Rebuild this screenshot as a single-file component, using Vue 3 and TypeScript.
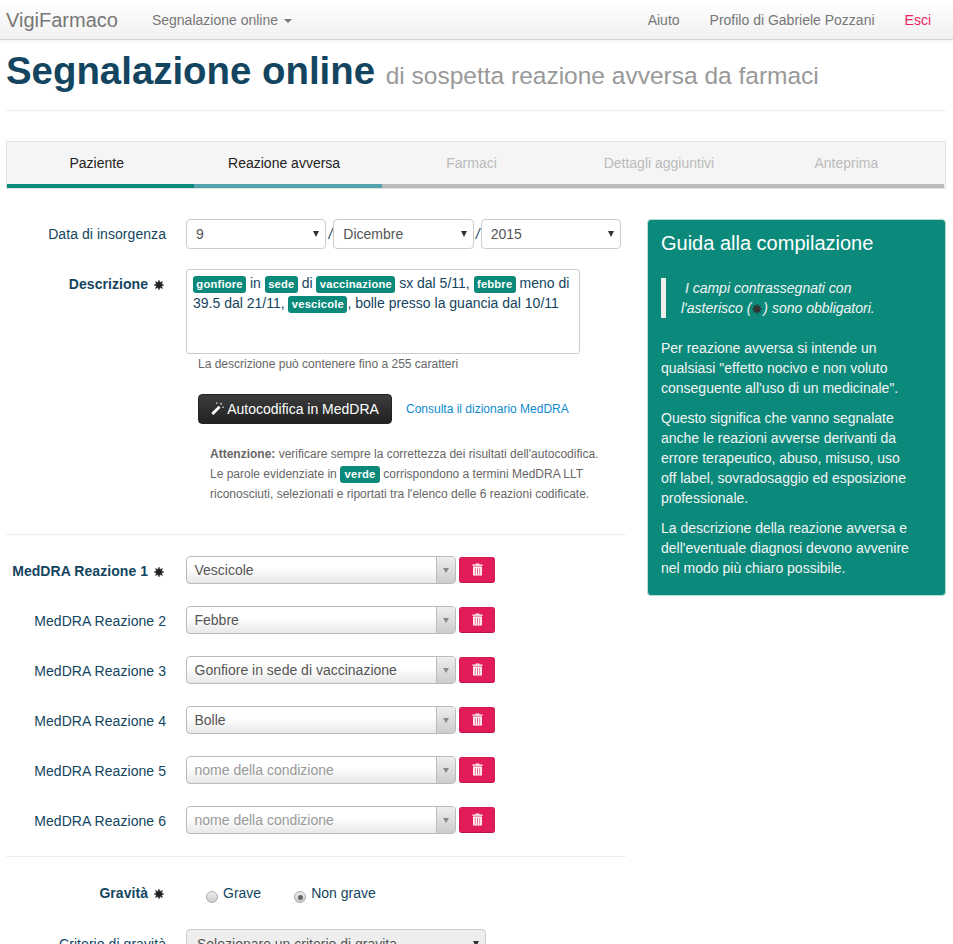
<script setup lang="ts">
interface Step { name: string; state: string }
interface Reaction { n: number; value: string; required: boolean }

const steps: Step[] = [
  { name: 'Paziente', state: 'done' },
  { name: 'Reazione avversa', state: 'current' },
  { name: 'Farmaci', state: 'todo' },
  { name: 'Dettagli aggiuntivi', state: 'todo' },
  { name: 'Anteprima', state: 'todo' },
]

const reactions: Reaction[] = [
  { n: 1, value: 'Vescicole', required: true },
  { n: 2, value: 'Febbre', required: false },
  { n: 3, value: 'Gonfiore in sede di vaccinazione', required: false },
  { n: 4, value: 'Bolle', required: false },
  { n: 5, value: '', required: false },
  { n: 6, value: '', required: false },
]

const starPath = 'M5 0 L6.07 2.41 L8.54 1.46 L7.59 3.93 L10 5 L7.59 6.07 L8.54 8.54 L6.07 7.59 L5 10 L3.93 7.59 L1.46 8.54 L2.41 6.07 L0 5 L2.41 3.93 L1.46 1.46 L3.93 2.41 Z'
</script>

<template>
  <div class="page">
    <nav class="navbar">
      <a class="brand">VigiFarmaco</a>
      <a class="nav-item">Segnalazione online <span class="caret"></span></a>
      <div class="nav-right">
        <a class="nav-item">Aiuto</a>
        <a class="nav-item">Profilo di Gabriele Pozzani</a>
        <a class="nav-item exit">Esci</a>
      </div>
    </nav>

    <main class="container">
      <header class="page-header">
        <h1>Segnalazione online <small>di sospetta reazione avversa da farmaci</small></h1>
      </header>

      <div class="steps">
        <div v-for="s in steps" :key="s.name" class="step" :class="s.state">{{ s.name }}</div>
      </div>

      <div class="columns">
        <form class="form" @submit.prevent>
          <div class="row date-row">
            <label class="lbl">Data di insorgenza</label>
            <div class="date-group">
              <div class="select-wrap"><select class="form-select"><option>9</option></select></div>
              <span class="slash">/</span>
              <div class="select-wrap"><select class="form-select"><option>Dicembre</option></select></div>
              <span class="slash">/</span>
              <div class="select-wrap"><select class="form-select"><option>2015</option></select></div>
            </div>
          </div>

          <div class="row descr-row">
            <label class="lbl req">Descrizione
              <svg class="star" viewBox="0 0 10 10"><path :d="starPath" /></svg>
            </label>
            <div class="descr-col">
              <div class="textarea">
                <span class="tag">gonfiore</span> in <span class="tag">sede</span> di <span class="tag">vaccinazione</span> sx dal 5/11, <span class="tag">febbre</span> meno di 39.5 dal 21/11, <span class="tag">vescicole</span>, bolle presso la guancia dal 10/11
              </div>
              <p class="help">La descrizione può contenere fino a 255 caratteri</p>
              <div class="actions">
                <button type="button" class="btn-dark">
                  <svg class="wand" viewBox="0 0 14 14">
                    <path d="M0.4 11.8 L8.2 4 L10.3 6.1 L2.5 13.9 Z" fill="#fff" />
                    <path d="M10.8 0.8 V3.2 M9.6 2 H12 M13 4.8 V6.4 M12.2 5.6 H13.8 M6.2 0.4 V2 M5.4 1.2 H7" stroke="#ddd" stroke-width="0.8" fill="none" />
                  </svg>
                  Autocodifica in MedDRA
                </button>
                <a class="dict">Consulta il dizionario MedDRA</a>
              </div>
              <p class="note">
                <b>Attenzione:</b> verificare sempre la correttezza dei risultati dell'autocodifica.<br />
                Le parole evidenziate in <span class="tag">verde</span> corrispondono a termini MedDRA LLT<br />
                riconosciuti, selezionati e riportati tra l'elenco delle 6 reazioni codificate.
              </p>
            </div>
          </div>

          <hr class="sep first-sep" />

          <div v-for="r in reactions" :key="r.n" class="row med-row">
            <label class="lbl" :class="{ req: r.required }">MedDRA Reazione {{ r.n }}
              <svg v-if="r.required" class="star" viewBox="0 0 10 10"><path :d="starPath" /></svg>
            </label>
            <div class="combo">
              <span class="combo-text" :class="{ empty: !r.value }">{{ r.value || 'nome della condizione' }}</span>
              <span class="combo-btn"><span class="combo-caret"></span></span>
            </div>
            <button type="button" class="btn-del" aria-label="Elimina">
              <svg class="trash" viewBox="0 0 12 14">
                <path d="M4 1.5 V0.4 H8 V1.5 H11.6 V3 H0.4 V1.5 Z M5 1.5 H7 V1.2 H5 Z" fill="#fff" fill-rule="evenodd" />
                <path fill-rule="evenodd" d="M1.2 3.8 H10.8 V13.6 H1.2 Z M3.1 5 V12.6 H3.8 V5 Z M5.65 5 V12.6 H6.35 V5 Z M8.2 5 V12.6 H8.9 V5 Z" fill="#fff" />
              </svg>
            </button>
          </div>

          <hr class="sep second-sep" />

          <div class="row grav-row">
            <label class="lbl req">Gravità
              <svg class="star" viewBox="0 0 10 10"><path :d="starPath" /></svg>
            </label>
            <div class="radios">
              <span class="radio"><span class="dot"></span>Grave</span>
              <span class="radio"><span class="dot on"></span>Non grave</span>
            </div>
          </div>

          <div class="row crit-row">
            <label class="lbl">Criterio di gravità</label>
            <div class="select-wrap crit"><select class="form-select"><option>Selezionare un criterio di gravita</option></select></div>
          </div>
        </form>

        <aside class="guide">
          <h3>Guida alla compilazione</h3>
          <blockquote>
            &nbsp;I campi contrassegnati con<br />l'asterisco (<svg class="star quote-star" viewBox="0 0 10 10"><path :d="starPath" /></svg>) sono obbligatori.
          </blockquote>
          <p>Per reazione avversa si intende un qualsiasi "effetto nocivo e non voluto conseguente all'uso di un medicinale".</p>
          <p>Questo significa che vanno segnalate anche le reazioni avverse derivanti da errore terapeutico, abuso, misuso, uso off label, sovradosaggio ed esposizione professionale.</p>
          <p>La descrizione della reazione avversa e dell'eventuale diagnosi devono avvenire nel modo più chiaro possibile.</p>
        </aside>
      </div>
    </main>
  </div>
</template>

<style>
html, body { margin: 0; padding: 0; background: #fff; }
</style>

<style scoped>
* { box-sizing: border-box; }
.page {
  height: 944px;
  overflow: hidden;
  font-family: "Liberation Sans", Arial, sans-serif;
  font-size: 14px;
  line-height: 20px;
  color: #134560;
}
.navbar {
  height: 40px;
  display: flex;
  align-items: center;
  padding: 0 22px 0 6px;
  background: linear-gradient(to bottom, #ffffff, #f1f1f1);
  border-bottom: 1px solid #d5d5d5;
  box-shadow: 0 1px 5px rgba(0, 0, 0, 0.08);
  position: relative;
}
.brand { font-size: 20px; color: #777; margin-right: 34px; }
.nav-item { color: #777; }
.caret {
  display: inline-block;
  width: 0;
  height: 0;
  margin-left: 2px;
  vertical-align: middle;
  border-top: 4px solid #777;
  border-left: 4px solid transparent;
  border-right: 4px solid transparent;
}
.nav-right { margin-left: auto; display: flex; gap: 30px; }
.exit { color: #e91e63; }
.container { padding: 0 7px 0 6px; }
.page-header { height: 71px; border-bottom: 1px solid #eee; margin-bottom: 30px; }
h1 {
  margin: 0;
  padding-top: 8px;
  font-size: 38.4px;
  line-height: 46px;
  font-weight: 700;
  color: #134560;
  white-space: nowrap;
}
h1 small { font-size: 24.5px; font-weight: 400; color: #999; }
.steps {
  display: flex;
  height: 48px;
  background: #f5f5f5;
  border: 1px solid #e3e3e3;
  padding-right: 1px;
  margin-bottom: 30px;
}
.step {
  flex: 1 1 0;
  text-align: center;
  padding: 11px 8px 0 0;
  color: #222;
  border-bottom: 4px solid #bbb;
  height: 46px;
}
.step.done { border-bottom-color: #0b8a7b; }
.step.current { border-bottom-color: #52a3ad; }
.step.todo { color: #bbb; }
.columns { display: flex; gap: 21px; align-items: flex-start; }
.form { width: 620px; flex: none; }
.guide {
  width: 299px;
  flex: none;
  height: 377px;
  background: #0b8a7b;
  border: 1px solid #b5dcd6;
  border-radius: 4px;
  padding: 9px 30px 9px 13px;
  color: #f4f4f4;
}
.guide h3 { margin: 3px 0 24px; font-size: 20px; line-height: 22px; font-weight: 400; color: #fff; white-space: nowrap; }
.guide blockquote {
  margin: 0 0 20px;
  padding: 0 0 0 15px;
  border-left: 5px solid #eee;
  font-style: italic;
  white-space: nowrap;
}
.guide p { margin: 0 0 10px; }
.row { display: flex; align-items: flex-start; }
.lbl { width: 160px; margin-right: 20px; text-align: right; flex: none; color: #134560; letter-spacing: 0.06px; }
.lbl.req { font-weight: 700; padding-right: 2px; white-space: nowrap; }
.star { width: 10px; height: 10px; margin-left: 2px; fill: #222; stroke: #222; stroke-width: 0.4; vertical-align: -1px; overflow: visible; }
.quote-star { margin: 0 1px; fill: #333; stroke: #333; }
.date-row { margin-bottom: 20px; }
.date-row .lbl { padding-top: 5px; }
.date-group { display: flex; align-items: center; gap: 0; width: 435px; }
.select-wrap { position: relative; flex: 1 1 0; min-width: 0; height: 30px; }
.select-wrap::after {
  content: "";
  position: absolute;
  right: 7px;
  top: 12px;
  width: 0;
  height: 0;
  border-top: 6px solid #333;
  border-left: 3.5px solid transparent;
  border-right: 3.5px solid transparent;
  pointer-events: none;
}
.form-select {
  appearance: none;
  -webkit-appearance: none;
  display: block;
  width: 100%;
  height: 30px;
  border: 1px solid #ccc;
  border-radius: 4px;
  background: #fff;
  color: #555;
  font-family: inherit;
  font-size: 14px;
  padding: 4px 9px;
}
.slash { width: 7px; text-indent: 1px; text-align: center; color: #134560; font-style: italic; }
.descr-row .lbl { padding-top: 5px; }
.descr-col { flex: none; width: 440px; }
.textarea {
  width: 394px;
  height: 85px;
  border: 1px solid #ccc;
  border-radius: 3px;
  padding: 3px 6px;
  color: #134560;
}
.tag {
  display: inline;
  background: #0b8a7b;
  color: #fff;
  font-size: 11.2px;
  font-weight: 700;
  line-height: 1;
  padding: 0.2em 0.3em 0.3em;
  border-radius: 3px;
  letter-spacing: 0.2px;
}
.help { margin: 2px 0 0 12px; font-size: 12px; line-height: 16px; color: #666; }
.actions { display: flex; align-items: center; margin: 22px 0 0 12px; }
.btn-dark {
  width: 194px;
  height: 30px;
  border: 1px solid #222;
  border-radius: 4px;
  background: linear-gradient(to bottom, #3c3c3c, #222);
  color: #fff;
  font-family: inherit;
  font-size: 14px;
  padding: 0;
  white-space: nowrap;
}
.wand { width: 13px; height: 13px; vertical-align: -1px; }
.dict { margin-left: 14px; font-size: 12px; color: #0d8bd0; }
.note { margin: 20px 0 0 24px; font-size: 12px; color: #666; line-height: 20px; white-space: nowrap; }
.note .tag { font-size: 11.2px; padding: 0.2em 0.4em 0.3em; }
.sep { border: 0; border-top: 1px solid #eee; margin: 0; }
.first-sep { margin-top: 30px; margin-bottom: 21px; }
.med-row { height: 28px; margin-bottom: 22px; align-items: flex-start; }
.med-row .lbl { padding-top: 5px; }
.combo {
  width: 270px;
  height: 28px;
  flex: none;
  display: flex;
  border: 1px solid #bbb;
  border-radius: 4px;
  background: linear-gradient(to bottom, #fff 40%, #e8e8e8);
  overflow: hidden;
}
.combo-text { flex: 1; padding-left: 7.5px; line-height: 27px; color: #555; }
.combo-text.empty { color: #999; }
.combo-btn {
  width: 19px;
  border-left: 1px solid #bbb;
  background: linear-gradient(to bottom, #eee, #ccc);
  display: flex;
  align-items: center;
  justify-content: center;
}
.combo-caret {
  width: 0;
  height: 0;
  border-top: 5px solid #888;
  border-left: 3.5px solid transparent;
  border-right: 3.5px solid transparent;
}
.btn-del {
  width: 36px;
  height: 26px;
  margin: 1px 0 0 3px;
  border: 1px solid #d41a52;
  border-bottom-color: #b8144a;
  border-radius: 3px;
  background: #e11c58;
  padding: 0;
  display: flex;
  align-items: center;
  justify-content: center;
}
.trash { width: 11px; height: 13px; margin-top: -1px; }
.second-sep { margin-bottom: 26px; }
.grav-row { margin-bottom: 26px; }
.radios { display: flex; gap: 33px; padding-left: 20px; }
.radio { display: inline-flex; align-items: flex-start; gap: 5px; color: #134560; }
.dot {
  width: 12px;
  height: 12px;
  margin-top: 8px;
  border: 1px solid #aaa;
  border-radius: 50%;
  background: linear-gradient(to bottom, #eee, #ccc);
  position: relative;
}
.dot.on::after {
  content: "";
  position: absolute;
  left: 2.5px;
  top: 2.5px;
  width: 5px;
  height: 5px;
  border-radius: 50%;
  background: #666;
}
.crit-row .lbl { padding-top: 5px; }
.crit { flex: none; width: 300px; }
.crit .form-select { background: #eee; padding-left: 10px; }
</style>
